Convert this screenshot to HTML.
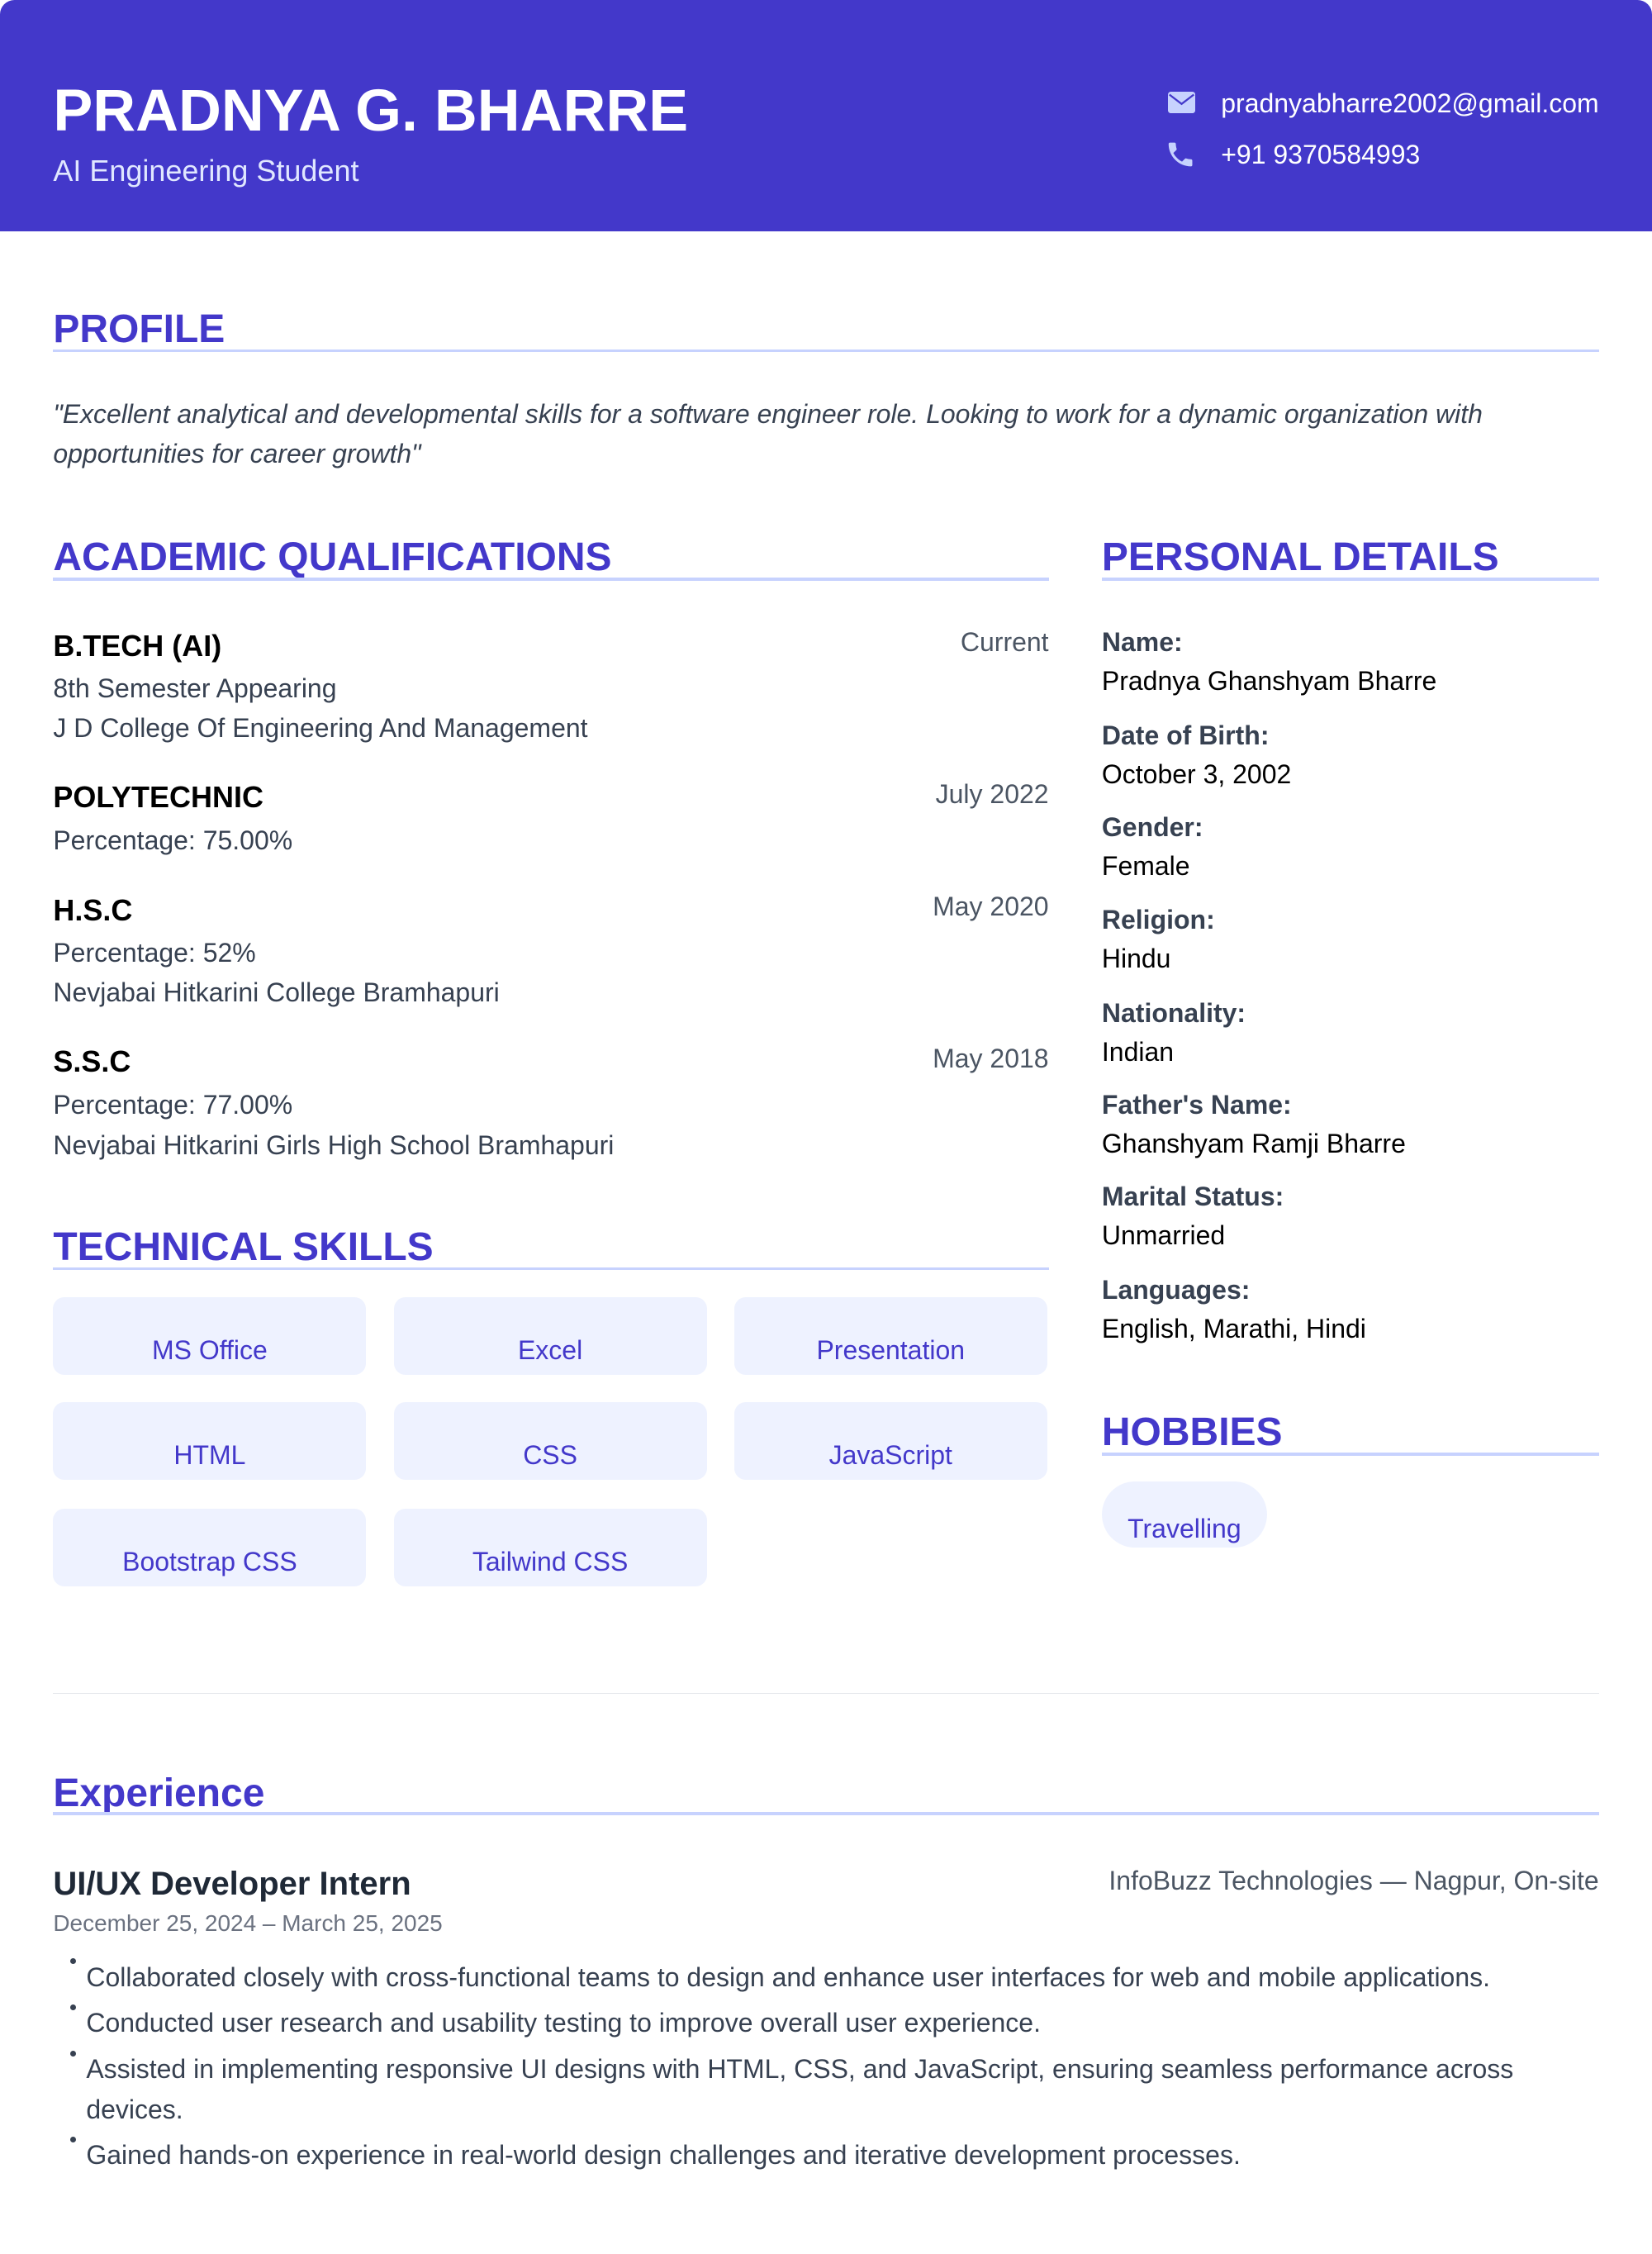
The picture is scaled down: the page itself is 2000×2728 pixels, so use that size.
<!DOCTYPE html>
<html><head><meta charset="utf-8"><style>
html,body{margin:0;padding:0;background:#fff}
body{width:1150px;height:1568.6px;zoom:1.73913;position:relative;overflow:hidden;font-family:"Liberation Sans",Arial,sans-serif}
.a{position:absolute;white-space:nowrap;line-height:28px}
.hdr{position:absolute;left:0;top:0;width:1150px;height:161px;background:#4338ca;border-radius:10px 10px 0 0}
.h{position:absolute;color:#4338ca;font-weight:bold;font-size:27.6px;line-height:34px}
.ln{position:absolute;height:2px;background:#c7d2fe}
.t{font-size:20.7px;font-weight:bold;color:#000}
.s{font-size:18.4px;color:#374151}
.d{font-size:18.4px;color:#4b5563;text-align:right}
.lab{font-size:18.4px;font-weight:bold;color:#374151}
.val{font-size:18.4px;color:#000}
.chip{position:absolute;width:218px;height:54px;background:#eef2ff;border-radius:8px;color:#4338ca;font-size:18.4px;text-align:center;line-height:20px;box-sizing:border-box;padding-top:27px}
.b{font-size:18.4px;color:#374151}
.dot{position:absolute;width:4px;height:4px;border-radius:50%;background:#374151}
</style></head><body>
<div class="hdr"></div>
<div class="a" style="left:37px;top:54px;font-size:41.3px;line-height:46px;font-weight:bold;color:#fff">PRADNYA G. BHARRE</div>
<div class="a" style="left:37px;top:105px;font-size:20.7px;color:#e0e7ff">AI Engineering Student</div>
<svg style="position:absolute;left:813px;top:64px" width="19" height="15" viewBox="0 0 19 15"><rect x="0" y="0" width="19" height="15" rx="2" fill="#c7d2fe"/><path d="M1 2 L9.5 8.5 L18 2" stroke="#4338ca" stroke-width="1.3" fill="none"/></svg>
<svg style="position:absolute;left:811px;top:96px" width="22" height="23" viewBox="0 0 24 24"><path fill="#c7d2fe" d="M6.6 10.8c1.4 2.8 3.8 5.1 6.6 6.6l2.2-2.2c.3-.3.7-.4 1-.2 1.1.4 2.3.6 3.6.6.6 0 1 .4 1 1V20c0 .6-.4 1-1 1C10.6 21 3 13.4 3 4c0-.6.4-1 1-1h3.5c.6 0 1 .4 1 1 0 1.3.2 2.5.6 3.6.1.3 0 .7-.2 1L6.6 10.8z"/></svg>
<div class="a" style="left:850px;top:58px;font-size:18.4px;color:#fff">pradnyabharre2002@gmail.com</div>
<div class="a" style="left:850px;top:94px;font-size:18.4px;color:#fff">+91 9370584993</div>

<div class="h" style="left:37px;top:212px">PROFILE</div>
<div class="ln" style="left:37px;width:1076px;top:243px"></div>
<div class="a" style="left:37px;top:274px;font-size:18.4px;font-style:italic;color:#374151">"Excellent analytical and developmental skills for a software engineer role. Looking to work for a dynamic organization with</div>
<div class="a" style="left:37px;top:302px;font-size:18.4px;font-style:italic;color:#374151">opportunities for career growth"</div>

<div class="h" style="left:37px;top:371px">ACADEMIC QUALIFICATIONS</div>
<div class="ln" style="left:37px;width:693px;top:402px"></div>
<div class="h" style="left:767px;top:371px">PERSONAL DETAILS</div>
<div class="ln" style="left:767px;width:346px;top:402px"></div>

<div class="a t" style="left:37px;top:436px">B.TECH (AI)</div>
<div class="a s" style="left:37px;top:465px">8th Semester Appearing</div>
<div class="a s" style="left:37px;top:493px">J D College Of Engineering And Management</div>
<div class="a d" style="right:420px;top:433px">Current</div>
<div class="a t" style="left:37px;top:541px">POLYTECHNIC</div>
<div class="a s" style="left:37px;top:571px">Percentage: 75.00%</div>
<div class="a d" style="right:420px;top:539px">July 2022</div>
<div class="a t" style="left:37px;top:620px">H.S.C</div>
<div class="a s" style="left:37px;top:649px">Percentage: 52%</div>
<div class="a s" style="left:37px;top:677px">Nevjabai Hitkarini College Bramhapuri</div>
<div class="a d" style="right:420px;top:617px">May 2020</div>
<div class="a t" style="left:37px;top:725px">S.S.C</div>
<div class="a s" style="left:37px;top:755px">Percentage: 77.00%</div>
<div class="a s" style="left:37px;top:783px">Nevjabai Hitkarini Girls High School Bramhapuri</div>
<div class="a d" style="right:420px;top:723px">May 2018</div>

<div class="h" style="left:37px;top:851px">TECHNICAL SKILLS</div>
<div class="ln" style="left:37px;width:693px;top:882px"></div>
<div class="chip" style="left:37px;top:903px">MS Office</div>
<div class="chip" style="left:274px;top:903px">Excel</div>
<div class="chip" style="left:511px;top:903px">Presentation</div>
<div class="chip" style="left:37px;top:976px">HTML</div>
<div class="chip" style="left:274px;top:976px">CSS</div>
<div class="chip" style="left:511px;top:976px">JavaScript</div>
<div class="chip" style="left:37px;top:1050px">Bootstrap CSS</div>
<div class="chip" style="left:274px;top:1050px">Tailwind CSS</div>

<div class="a lab" style="left:767px;top:433px">Name:</div>
<div class="a val" style="left:767px;top:460px">Pradnya Ghanshyam Bharre</div>
<div class="a lab" style="left:767px;top:498px">Date of Birth:</div>
<div class="a val" style="left:767px;top:525px">October 3, 2002</div>
<div class="a lab" style="left:767px;top:562px">Gender:</div>
<div class="a val" style="left:767px;top:589px">Female</div>
<div class="a lab" style="left:767px;top:626px">Religion:</div>
<div class="a val" style="left:767px;top:653px">Hindu</div>
<div class="a lab" style="left:767px;top:691px">Nationality:</div>
<div class="a val" style="left:767px;top:718px">Indian</div>
<div class="a lab" style="left:767px;top:755px">Father's Name:</div>
<div class="a val" style="left:767px;top:782px">Ghanshyam Ramji Bharre</div>
<div class="a lab" style="left:767px;top:819px">Marital Status:</div>
<div class="a val" style="left:767px;top:846px">Unmarried</div>
<div class="a lab" style="left:767px;top:884px">Languages:</div>
<div class="a val" style="left:767px;top:911px">English, Marathi, Hindi</div>

<div class="h" style="left:767px;top:980px">HOBBIES</div>
<div class="ln" style="left:767px;width:346px;top:1011px"></div>
<div class="a" style="left:767px;top:1031px;width:115px;height:46px;border-radius:23px;background:#eef2ff;color:#4338ca;font-size:18.4px;text-align:center;line-height:20px;box-sizing:border-box;padding-top:23px">Travelling</div>

<div style="position:absolute;left:37px;width:1076px;top:1178px;height:1px;background:#e5e7eb"></div>
<div class="h" style="left:37px;top:1231px">Experience</div>
<div class="ln" style="left:37px;width:1076px;top:1261px"></div>
<div class="a" style="left:37px;top:1297px;font-size:23px;font-weight:bold;color:#1f2937">UI/UX Developer Intern</div>
<div class="a" style="right:37px;top:1295px;font-size:18.4px;color:#4b5563">InfoBuzz Technologies — Nagpur, On-site</div>
<div class="a" style="left:37px;top:1325px;font-size:16.1px;color:#6b7280">December 25, 2024 – March 25, 2025</div>
<div class="dot" style="left:49px;top:1363px"></div>
<div class="a b" style="left:60px;top:1362px">Collaborated closely with cross-functional teams to design and enhance user interfaces for web and mobile applications.</div>
<div class="dot" style="left:49px;top:1395px"></div>
<div class="a b" style="left:60px;top:1394px">Conducted user research and usability testing to improve overall user experience.</div>
<div class="dot" style="left:49px;top:1427px"></div>
<div class="a b" style="left:60px;top:1426px">Assisted in implementing responsive UI designs with HTML, CSS, and JavaScript, ensuring seamless performance across</div>
<div class="a b" style="left:60px;top:1454px">devices.</div>
<div class="dot" style="left:49px;top:1487px"></div>
<div class="a b" style="left:60px;top:1486px">Gained hands-on experience in real-world design challenges and iterative development processes.</div>
</body></html>
